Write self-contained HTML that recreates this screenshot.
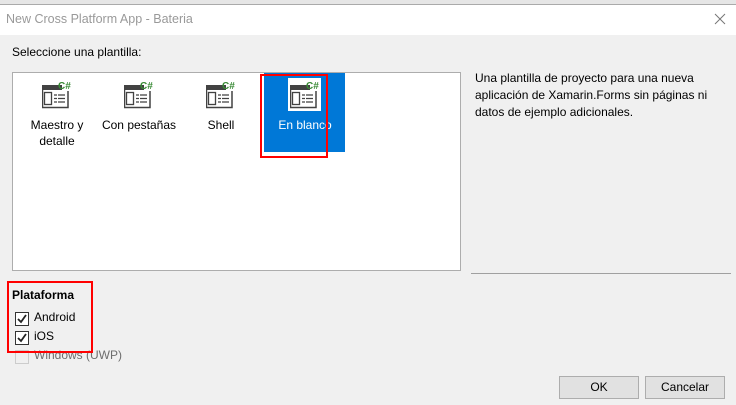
<!DOCTYPE html><html><head><style>
body{margin:0;width:736px;height:405px;background:#f0f0f0;font-family:"Liberation Sans",sans-serif;font-size:12px;color:#000;position:relative;overflow:hidden}
.a{position:absolute}
.item{position:absolute;top:73px;width:82px;height:80px;text-align:center}
.item svg{position:absolute;left:26px;top:8px}
.item .l{position:absolute;top:44px;left:0;width:100%;line-height:16px}
.cb{position:absolute;left:15px;width:12px;height:12px;border:1px solid #333;background:#fff}
.btn{position:absolute;top:376px;height:21px;border:1px solid #adadad;background:#e1e1e1;text-align:center;line-height:21px}
</style></head><body>
<div class="a" style="left:0;top:0;width:736px;height:4px;background:#e6e6e6;border-bottom:1px solid #aaa"></div>
<div class="a" style="left:0;top:5px;width:736px;height:30px;background:#fff"></div>
<div class="a" style="left:6px;top:12px;color:#999;font-size:12.5px">New Cross Platform App - Bateria</div>
<svg class="a" style="left:714px;top:13px" width="12" height="12"><path d="M1 1L11 11M11 1L1 11" stroke="#777" stroke-width="1"/></svg>
<div class="a" style="left:12px;top:45px">Seleccione una plantilla:</div>
<div class="a" style="left:12px;top:72px;width:447px;height:197px;background:#fff;border:1px solid #adadad"></div>
<div class="a" style="left:264px;top:73px;width:81px;height:79px;background:#0078d7"></div>
<div class="a" style="left:288px;top:78px;width:33px;height:33px;background:#fff"></div>
<div class="item" style="left:16px"><svg width="30" height="30"><use href="#ic"/></svg><div class="l">Maestro y<br>detalle</div></div>
<div class="item" style="left:98px"><svg width="30" height="30"><use href="#ic"/></svg><div class="l">Con pestañas</div></div>
<div class="item" style="left:180px"><svg width="30" height="30"><use href="#ic"/></svg><div class="l">Shell</div></div>
<div class="item" style="left:264px;color:#fff"><svg width="30" height="30"><use href="#ic"/></svg><div class="l">En blanco</div></div>
<svg width="0" height="0" style="position:absolute"><defs><g id="ic">
<rect x="0" y="4" width="20" height="5" fill="#424242"/>
<text x="16" y="8" font-family="Liberation Sans" font-weight="bold" font-size="10" fill="#388a34">C#</text>
<path d="M0.5 9v17.5h25.5V10" fill="none" stroke="#424242" stroke-width="1.5"/>
<rect x="2.5" y="11.5" width="7" height="12" fill="none" stroke="#424242" stroke-width="1.3"/>
<path d="M12 14h3M16 14h7M12 17.5h3M16 17.5h7M12 21h3M16 21h7" stroke="#424242" stroke-width="1.3"/>
</g></defs></svg>
<div class="a" style="left:260px;top:74px;width:64px;height:80px;border:2px solid #f00"></div>
<div class="a" style="left:475px;top:70px;line-height:17px">Una plantilla de proyecto para una nueva<br>aplicación de Xamarin.Forms sin páginas ni<br>datos de ejemplo adicionales.</div>
<div class="a" style="left:471px;top:273px;width:260px;height:1px;background:#a0a0a0"></div>
<div class="a" style="left:12px;top:288px;font-weight:bold">Plataforma</div>
<div class="cb" style="top:312px"></div><svg class="a" style="left:16px;top:313px" width="12" height="12"><path d="M2 6l3 3 5-7" stroke="#222" stroke-width="1.8" fill="none"/></svg>
<div class="a" style="left:34px;top:310px">Android</div>
<div class="cb" style="top:331px"></div><svg class="a" style="left:16px;top:332px" width="12" height="12"><path d="M2 6l3 3 5-7" stroke="#222" stroke-width="1.8" fill="none"/></svg>
<div class="a" style="left:34px;top:329px">iOS</div>
<div class="cb" style="top:350px;border-color:#ccc;background:#f0f0f0"></div>
<div class="a" style="left:34px;top:348px;color:#6d6d6d">Windows (UWP)</div>
<div class="a" style="left:7px;top:281px;width:82px;height:68px;border:2px solid #f00"></div>
<div class="btn" style="left:559px;width:78px">OK</div>
<div class="btn" style="left:645px;width:78px">Cancelar</div>
</body></html>
